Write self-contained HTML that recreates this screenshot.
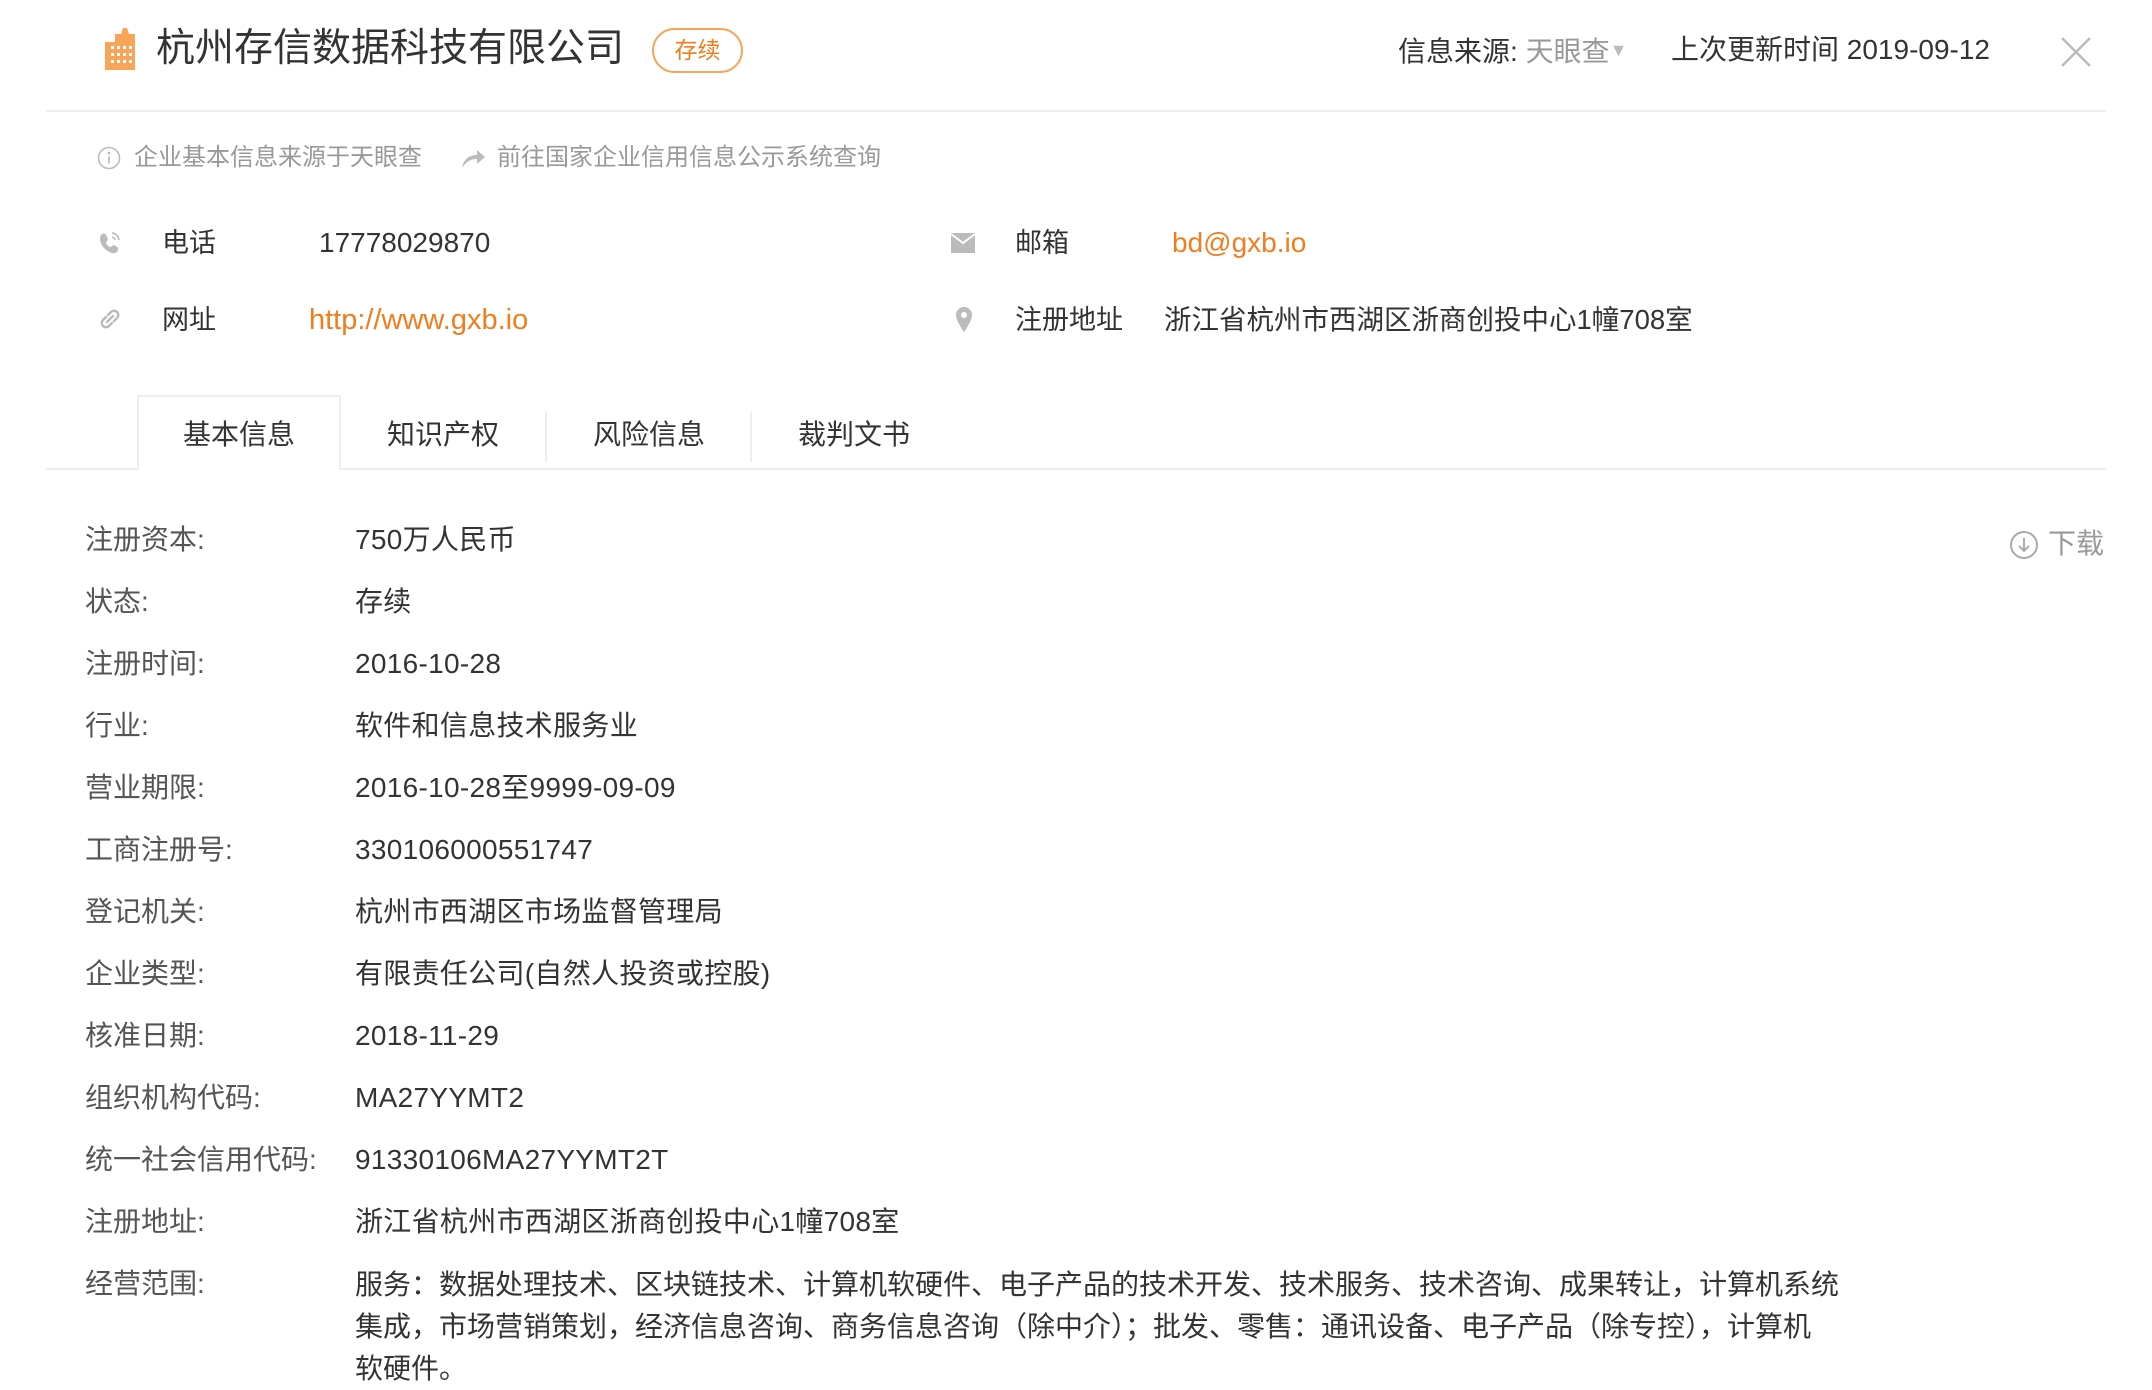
<!DOCTYPE html>
<html><head><meta charset="utf-8"><style>
*{margin:0;padding:0;box-sizing:border-box}
body{width:2152px;height:1386px;background:#fff;position:relative;overflow:hidden;font-family:"Liberation Sans","Noto Sans CJK SC",sans-serif;color:#333}
.a{position:absolute;white-space:nowrap}
.lbl{position:absolute;left:85px;font-size:28px;color:#555;white-space:nowrap;line-height:34px}
.val{position:absolute;left:355px;font-size:28px;color:#333;white-space:nowrap;line-height:34px;letter-spacing:0.3px}
</style></head><body>
<svg class="a" style="left:103px;top:28px" width="36" height="42" viewBox="0 0 36 42">
<path d="M2 14h10V6h6l2-6h4l2 6h6v36H2z" fill="#f8a55a"/>
<g fill="#fff"><rect x="8" y="18" width="3" height="3"/><rect x="14" y="18" width="3" height="3"/><rect x="20" y="18" width="3" height="3"/><rect x="26" y="18" width="3" height="3"/>
<rect x="8" y="25" width="3" height="3"/><rect x="14" y="25" width="3" height="3"/><rect x="20" y="25" width="3" height="3"/><rect x="26" y="25" width="3" height="3"/>
<rect x="8" y="32" width="3" height="3"/><rect x="14" y="32" width="3" height="3"/><rect x="20" y="32" width="3" height="3"/><rect x="26" y="32" width="3" height="3"/></g></svg>
<div class="a" style="left:156px;top:26px;font-size:39px;line-height:46px;color:#333">杭州存信数据科技有限公司</div>
<div class="a" style="left:652px;top:28px;width:91px;height:45px;border:2px solid #f5a45c;border-radius:23px;color:#f07d1e;font-size:23px;line-height:41px;text-align:center">存续</div>
<div class="a" style="left:1398px;top:33px;font-size:28px;line-height:34px;color:#333">信息来源: <span style="color:#999">天眼查</span><span style="color:#bbb;font-size:18px;vertical-align:5px">▼</span></div>
<div class="a" style="left:1671px;top:33px;font-size:28px;line-height:34px;color:#333">上次更新时间 2019-09-12</div>
<svg class="a" style="left:2060px;top:36px" width="32" height="32" viewBox="0 0 32 32"><path d="M2 2L30 30M30 2L2 30" stroke="#bbb" stroke-width="2.5"/></svg>
<div class="a" style="left:46px;top:110px;width:2060px;height:2px;background:#eee"></div>
<svg class="a" style="left:97px;top:146px" width="24" height="24" viewBox="0 0 24 24"><circle cx="12" cy="12" r="10.5" fill="none" stroke="#bbb" stroke-width="1.6"/><circle cx="12" cy="7" r="1.4" fill="#bbb"/><path d="M12 10.5v7" stroke="#bbb" stroke-width="1.8"/></svg>
<div class="a" style="left:134px;top:143px;font-size:24px;line-height:30px;color:#999">企业基本信息来源于天眼查</div>
<svg class="a" style="left:460px;top:146px" width="26" height="24" viewBox="0 0 26 24"><path d="M2 22C4 12 10 9 17 9V4l8 7-8 7v-5C10 13 6 16 2 22z" fill="#bbb"/></svg>
<div class="a" style="left:497px;top:143px;font-size:24px;line-height:30px;color:#999">前往国家企业信用信息公示系统查询</div>
<svg class="a" style="left:97px;top:230px" width="26" height="26" viewBox="0 0 26 26"><path d="M4 5c2-2 4-2 5 0l2 4c0 2-2 2-2 4 1 2 2 3 4 4 2 0 2-2 4-2l3 2c2 1 1 3 0 5-3 3-9 0-13-4S2 8 4 5z" fill="#bbb"/><path d="M15 3a8 8 0 0 1 7 7M15 7a4 4 0 0 1 3 3" stroke="#bbb" stroke-width="1.6" fill="none"/></svg>
<div class="a" style="left:162px;top:226px;font-size:27px;line-height:34px;color:#333">电话</div>
<div class="a" style="left:319px;top:226px;font-size:28px;line-height:34px;color:#333">17778029870</div>
<svg class="a" style="left:950px;top:232px" width="26" height="22" viewBox="0 0 26 22"><path d="M1 1h24v20H1z" fill="#bbb"/><path d="M1 2l12 9 12-9" stroke="#fff" stroke-width="2" fill="none"/></svg>
<div class="a" style="left:1015px;top:226px;font-size:27px;line-height:34px;color:#333">邮箱</div>
<div class="a" style="left:1172px;top:226px;font-size:28px;line-height:34px;color:#f07d1e">bd@gxb.io</div>
<svg class="a" style="left:97px;top:306px" width="26" height="26" viewBox="0 0 26 26"><g fill="none" stroke="#bbb" stroke-width="2.4" stroke-linecap="round"><path d="M11 9l3-3a4 4 0 0 1 6 6l-3 3"/><path d="M15 17l-3 3a4 4 0 0 1-6-6l3-3"/><path d="M10 16l6-6"/></g></svg>
<div class="a" style="left:162px;top:303px;font-size:27px;line-height:34px;color:#333">网址</div>
<div class="a" style="left:309px;top:303px;font-size:29px;line-height:34px;color:#f07d1e">http://www.gxb.io</div>
<svg class="a" style="left:954px;top:306px" width="20" height="28" viewBox="0 0 20 28"><path d="M10 1a8 8 0 0 1 8 8c0 6-8 17-8 17S2 15 2 9a8 8 0 0 1 8-8z" fill="#bbb"/><circle cx="10" cy="9" r="3" fill="#fff"/></svg>
<div class="a" style="left:1015px;top:303px;font-size:27px;line-height:34px;color:#333">注册地址</div>
<div class="a" style="left:1164px;top:303px;font-size:27.5px;line-height:34px;color:#333">浙江省杭州市西湖区浙商创投中心1幢708室</div>
<div class="a" style="left:46px;top:468px;width:2060px;height:2px;background:#eee"></div>
<div class="a" style="left:137px;top:395px;width:204px;height:75px;border:2px solid #eee;border-bottom:none;background:#fff"></div>
<div class="a" style="left:545px;top:412px;width:2px;height:50px;background:#eee"></div>
<div class="a" style="left:750px;top:412px;width:2px;height:50px;background:#eee"></div>
<div class="a" style="left:137px;top:418px;width:204px;text-align:center;font-size:28px;line-height:34px">基本信息</div>
<div class="a" style="left:341px;top:418px;width:204px;text-align:center;font-size:28px;line-height:34px">知识产权</div>
<div class="a" style="left:547px;top:418px;width:204px;text-align:center;font-size:28px;line-height:34px">风险信息</div>
<div class="a" style="left:752px;top:418px;width:204px;text-align:center;font-size:28px;line-height:34px">裁判文书</div>
<svg class="a" style="left:2009px;top:530px" width="30" height="30" viewBox="0 0 30 30"><circle cx="15" cy="15" r="13" fill="none" stroke="#aaa" stroke-width="2"/><path d="M15 8v13M10 16l5 5 5-5" fill="none" stroke="#aaa" stroke-width="2"/></svg>
<div class="a" style="left:2048px;top:527px;font-size:28px;line-height:34px;color:#999">下载</div>
<div class="lbl" style="top:523px">注册资本:</div><div class="val" style="top:523px">750万人民币</div>
<div class="lbl" style="top:585px">状态:</div><div class="val" style="top:585px">存续</div>
<div class="lbl" style="top:647px">注册时间:</div><div class="val" style="top:647px">2016-10-28</div>
<div class="lbl" style="top:709px">行业:</div><div class="val" style="top:709px">软件和信息技术服务业</div>
<div class="lbl" style="top:771px">营业期限:</div><div class="val" style="top:771px">2016-10-28至9999-09-09</div>
<div class="lbl" style="top:833px">工商注册号:</div><div class="val" style="top:833px">330106000551747</div>
<div class="lbl" style="top:895px">登记机关:</div><div class="val" style="top:895px">杭州市西湖区市场监督管理局</div>
<div class="lbl" style="top:957px">企业类型:</div><div class="val" style="top:957px">有限责任公司(自然人投资或控股)</div>
<div class="lbl" style="top:1019px">核准日期:</div><div class="val" style="top:1019px">2018-11-29</div>
<div class="lbl" style="top:1081px">组织机构代码:</div><div class="val" style="top:1081px">MA27YYMT2</div>
<div class="lbl" style="top:1143px">统一社会信用代码:</div><div class="val" style="top:1143px">91330106MA27YYMT2T</div>
<div class="lbl" style="top:1205px">注册地址:</div><div class="val" style="top:1205px">浙江省杭州市西湖区浙商创投中心1幢708室</div>
<div class="lbl" style="top:1267px">经营范围:</div>
<div class="val" style="top:1264px;line-height:42px;letter-spacing:0">服务：数据处理技术、区块链技术、计算机软硬件、电子产品的技术开发、技术服务、技术咨询、成果转让，计算机系统<br>集成，市场营销策划，经济信息咨询、商务信息咨询（除中介）；批发、零售：通讯设备、电子产品（除专控），计算机<br>软硬件。</div>
</body></html>
